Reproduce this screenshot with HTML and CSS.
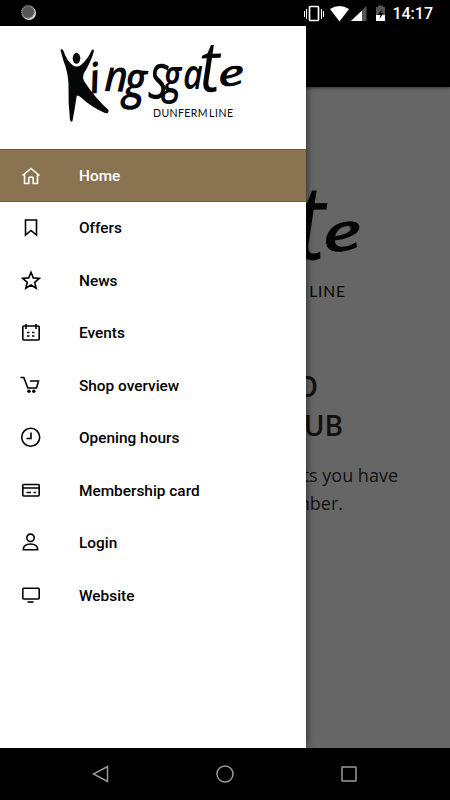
FILE: index.html
```html
<!DOCTYPE html>
<html lang="en">
<head>
<meta charset="utf-8">
<meta name="viewport" content="width=device-width">
<title>Kingsgate</title>
<link rel="stylesheet" href="styles.css">
</head>
<body>
<svg class="defs" aria-hidden="true">
  <symbol id="logo" viewBox="60 40 190 85">
    <ellipse cx="76.500" cy="58.300" rx="3.800" ry="5.500"/>
    <path d="M60.500 50C61 48.500 63 49 63.500 51Q67 61 72.500 65Q76 68 81 65Q88 59 91.500 50.500Q93.500 48.500 94 51Q91 62 83.500 74Q82.500 78 84 81Q95 98 108.500 110Q109 114 105 113Q91 107 80.500 97Q77 94 76.500 97Q75 108 72.500 121Q71 123 70 120Q68 103 68.500 84Q68 72 63.500 61Z"/>
    <g class="script">
      <text transform="translate(91 94) rotate(-10) scale(1.100 1.100)">i</text>
      <text transform="translate(104 91) rotate(2) scale(1.050 1.150)">n</text>
      <text transform="translate(123 97) rotate(4) scale(1.100 1.350)">g</text>
      <text class="thin" transform="translate(148 98) rotate(4) scale(1.200 1.700)">s</text>
      <text transform="translate(163 93) scale(.900 1.250)">g</text>
      <text transform="translate(183 89) scale(.900 1.080)">a</text>
      <text class="thin" transform="translate(200 92) rotate(-2) scale(1.650 1.860)">t</text>
      <text transform="translate(219 88) rotate(-10) scale(1.400 .920)">e</text>
    </g>
    <text class="place" y="117"><tspan x="153" textLength="54.500">DUNFERM</tspan><tspan x="209" textLength="24">LINE</tspan></text>
  </symbol>
</svg>

<header class="status">
  <svg class="sync" viewBox="0 0 18 18"><circle cx="9" cy="9" r="7" fill="#ddd"/><circle cx="8" cy="8" r="6.500" fill="#555"/><circle cx="8" cy="8" r="6.200" fill="none" stroke="#999" stroke-width="1.500" stroke-dasharray="1 1"/></svg>
  <svg class="signals" viewBox="0 0 84 20">
    <rect x="5.500" y="2.500" width="9" height="14" rx="1" fill="none" stroke="#fff" stroke-width="1.700"/>
    <path d="M2.500 5v10M.5 7v6M17.500 5v10M19.500 7v6" stroke="#fff"/>
    <path d="M26 5Q35.500-1 45 5L35.500 17.500Z" fill="#fff"/>
    <path d="M47 17 62.500 2V17Z" fill="#555"/><path d="M47 17 58 6.500V17Z" fill="#fff"/>
    <path d="M72 3h2V1.500h5V3h2V17h-9Z" fill="#555"/><path d="M72 11h9v6h-9Z" fill="#fff"/><path d="m78 5-4 6h2.500l-1 4 4-6H77Z" fill="#000"/>
  </svg>
  <time class="clock">14:17</time>
</header>

<div class="screen">
  <main class="page">
    <div class="appbar"></div>
    <svg class="hero"><use href="#logo"/></svg>
    <h1 class="title"><span>O</span><span>UB</span></h1>
    <p class="intro"><span>ts you have</span><span>mber.</span></p>
  </main>
  <aside class="drawer">
    <div class="brand"><svg><use href="#logo"/></svg></div>
    <nav class="menu">
      <a class="item active"><svg viewBox="0 0 20 20"><path d="m1.500 9.500 8.500-7 8.500 7M3.500 8v9.500h4.300v-5q0-1.500 2.200-1.500t2.200 1.500v5h4.300V8"/></svg>Home</a>
      <a class="item"><svg viewBox="0 0 20 20"><path d="M4.500 2h11v15L10 12.500 4.500 17Z"/></svg>Offers</a>
      <a class="item"><svg viewBox="0 0 20 20"><path d="m10 1.300 2.300 5.600 6 .4-4.600 4 1.500 5.900-5.200-3.200-5.200 3.200 1.500-5.900-4.600-4 6-.4Z"/></svg>News</a>
      <a class="item"><svg viewBox="0 0 20 20"><rect x="1.800" y="3" width="16.400" height="14" rx="1"/><path d="M5 1v5M15 1v5M6 9.500h2.500m2.500 0h2.500M6 13h2.500m2.500 0h2.500"/></svg>Events</a>
      <a class="item"><svg viewBox="0 0 20 20"><path d="M-.5 1.500h3.300l4 10.500h8.700L17.500 5H9"/><circle class="dot" cx="8" cy="15.200" r="1.700"/><circle class="dot" cx="12.800" cy="15.200" r="1.700"/></svg>Shop overview</a>
      <a class="item"><svg viewBox="0 0 20 20"><circle cx="9.700" cy="9.300" r="9"/><path d="M10 4.500v6H5.500"/></svg>Opening hours</a>
      <a class="item"><svg viewBox="0 0 20 20"><rect x="1.800" y="3.500" width="16.400" height="11.500" rx="1"/><path d="M2 7h16M5.500 11.500H10m2.500 0H15"/></svg>Membership card</a>
      <a class="item"><svg viewBox="0 0 20 20"><circle cx="9.500" cy="4.800" r="3.700"/><path d="M2.300 16.800q0-5.800 7.200-5.800t7.200 5.800Z"/></svg>Login</a>
      <a class="item"><svg viewBox="0 0 20 20"><rect x="1.800" y="2.300" width="16.400" height="10.700" rx="1"/><path d="M6.500 16h6"/></svg>Website</a>
    </nav>
  </aside>
</div>

<footer class="navbar">
  <svg viewBox="0 0 18 18"><path d="M15.500 1.500v15L1.500 9Z"/></svg>
  <svg viewBox="0 0 18 18"><circle cx="9" cy="9" r="8"/></svg>
  <svg viewBox="0 0 18 18"><rect x="2" y="2" width="14" height="14" rx=".5"/></svg>
</footer>
</body>
</html>
```
FILE: styles.css
```css
* { box-sizing: border-box; }
body {
  margin: 0;
  width: 450px;
  height: 800px;
  display: flex;
  flex-direction: column;
  overflow: hidden;
  background: #000;
  font-family: Roboto, sans-serif;
}
.defs { position: absolute; width: 0; height: 0; }
#logo { overflow: visible; }
.script { font: italic 600 38px "Open Sans", sans-serif; }
.thin { font-weight: 400; }
.place { font: 400 10.5px Lato, sans-serif; }

.status {
  height: 26px;
  flex: none;
  display: flex;
  align-items: center;
  padding: 0 17px 0 20px;
  color: #fff;
}
.sync { width: 18px; height: 18px; }
.signals { width: 84px; height: 20px; margin-left: auto; margin-top: 2px; }
.clock { font-size: 16px; font-weight: 500; line-height: 20px; margin: 2px 0 0 4px; }

.screen { position: relative; height: 722px; flex: none; overflow: hidden; }
.page {
  height: 100%;
  background: #666;
  display: flex;
  flex-direction: column;
  align-items: flex-end;
}
.appbar { width: 100%; height: 61px; flex: none; background: #000; box-shadow: 0 1px 3px #0008; }
.hero { width: 281px; height: 126px; margin: 96px 80px 0 0; flex: none; fill: #030504; overflow: visible; }
.title {
  margin: 58px 107px 0 0;
  font: 600 28px/39px "Open Sans", sans-serif;
  color: #111;
}
.title span, .intro span { display: block; text-align: right; }
.title span:first-child { margin-right: 25px; }
.intro {
  margin: 16px 52px 0 0;
  font: 400 18px/28px "Open Sans", sans-serif;
  color: #111;
}
.intro span:last-child { margin-right: 55px; }

.drawer {
  position: absolute;
  inset: 0 auto 0 0;
  width: 306px;
  background: #fff;
  box-shadow: 0 0 8px #000a;
}
.brand { height: 123px; padding: 14px 0 0 60px; }
.brand svg { display: block; width: 190px; height: 85px; fill: #050708; overflow: visible; }
.menu { display: grid; grid-auto-rows: 52.5px; }
.item {
  display: flex;
  align-items: center;
  padding: 1px 0 0 21px;
  gap: 38px;
  font-size: 15.4px;
  font-weight: 500;
  color: #000;
}
.item svg {
  width: 20px;
  height: 20px;
  overflow: visible;
  fill: none;
  stroke: currentColor;
  stroke-width: 1.6;
}
.item .dot { fill: currentColor; stroke: none; }
.active {
  color: #fff;
  background: #8a7350;
  border-top: 1px solid #7b5a17;
  border-bottom: 1px solid #7b5a17;
}

.navbar {
  height: 52px;
  flex: none;
  display: flex;
  justify-content: space-between;
  align-items: center;
  padding: 0 92px;
}
.navbar svg { width: 18px; height: 18px; fill: none; stroke: #999; stroke-width: 1.5; }
```
